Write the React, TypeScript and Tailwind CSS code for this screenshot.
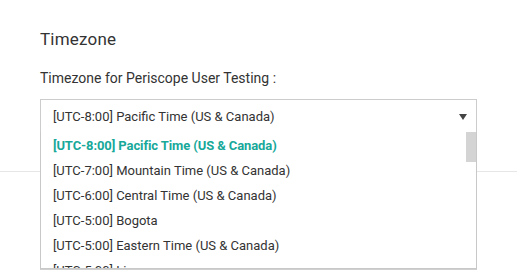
import React from "react";

const items = [
  "[UTC-8:00] Pacific Time (US & Canada)",
  "[UTC-7:00] Mountain Time (US & Canada)",
  "[UTC-6:00] Central Time (US & Canada)",
  "[UTC-5:00] Bogota",
  "[UTC-5:00] Eastern Time (US & Canada)",
  "[UTC-5:00] Lima",
];

export default function App() {
  return (
    <div
      className="relative w-[517px] h-[270px] overflow-hidden bg-white text-[#333]"
      style={{ fontFamily: "Roboto, 'Noto Sans', sans-serif" }}
    >
      <div className="px-[40px] pt-[28px]">
        <h2 className="text-[17px] leading-[22px] tracking-[0.2px] text-[#333]">Timezone</h2>
        <div className="mt-[19px] text-[14px] leading-[18px] text-[#333]">
          Timezone for Periscope User Testing :
        </div>
        <div className="mt-[12px] flex h-[35px] w-[437px] items-center justify-between border border-[#cccccc] pl-[12px] pr-[9px] text-[13px]">
          <span>[UTC-8:00] Pacific Time (US &amp; Canada)</span>
          <svg width="8" height="6" viewBox="0 0 8 6">
            <path d="M0 0 H8 L4 6 Z" fill="#444" />
          </svg>
        </div>
      </div>
      <div className="mt-[37px] h-px w-full bg-[#e6e6e6]" />
      <div className="absolute left-[40px] top-[132px] flex h-[137px] w-[437px] border-x border-b border-[#c8c8c8] bg-white shadow-[0_1px_0_#d0d0d0]">
        <div className="flex-1 overflow-hidden pt-[1px]">
          {items.map((t, i) => (
            <div
              key={i}
              className={
                i === 0
                  ? "flex h-[25px] items-center pl-[12px] text-[13px] tracking-[-0.1px] font-bold text-[#17a89a]"
                  : "flex h-[25px] items-center pl-[12px] text-[13px] text-[#333]"
              }
            >
              {t}
            </div>
          ))}
        </div>
        <div className="w-[10px]">
          <div className="h-[30px] w-[10px] bg-[#d4d4d4]" />
        </div>
      </div>
    </div>
  );
}
